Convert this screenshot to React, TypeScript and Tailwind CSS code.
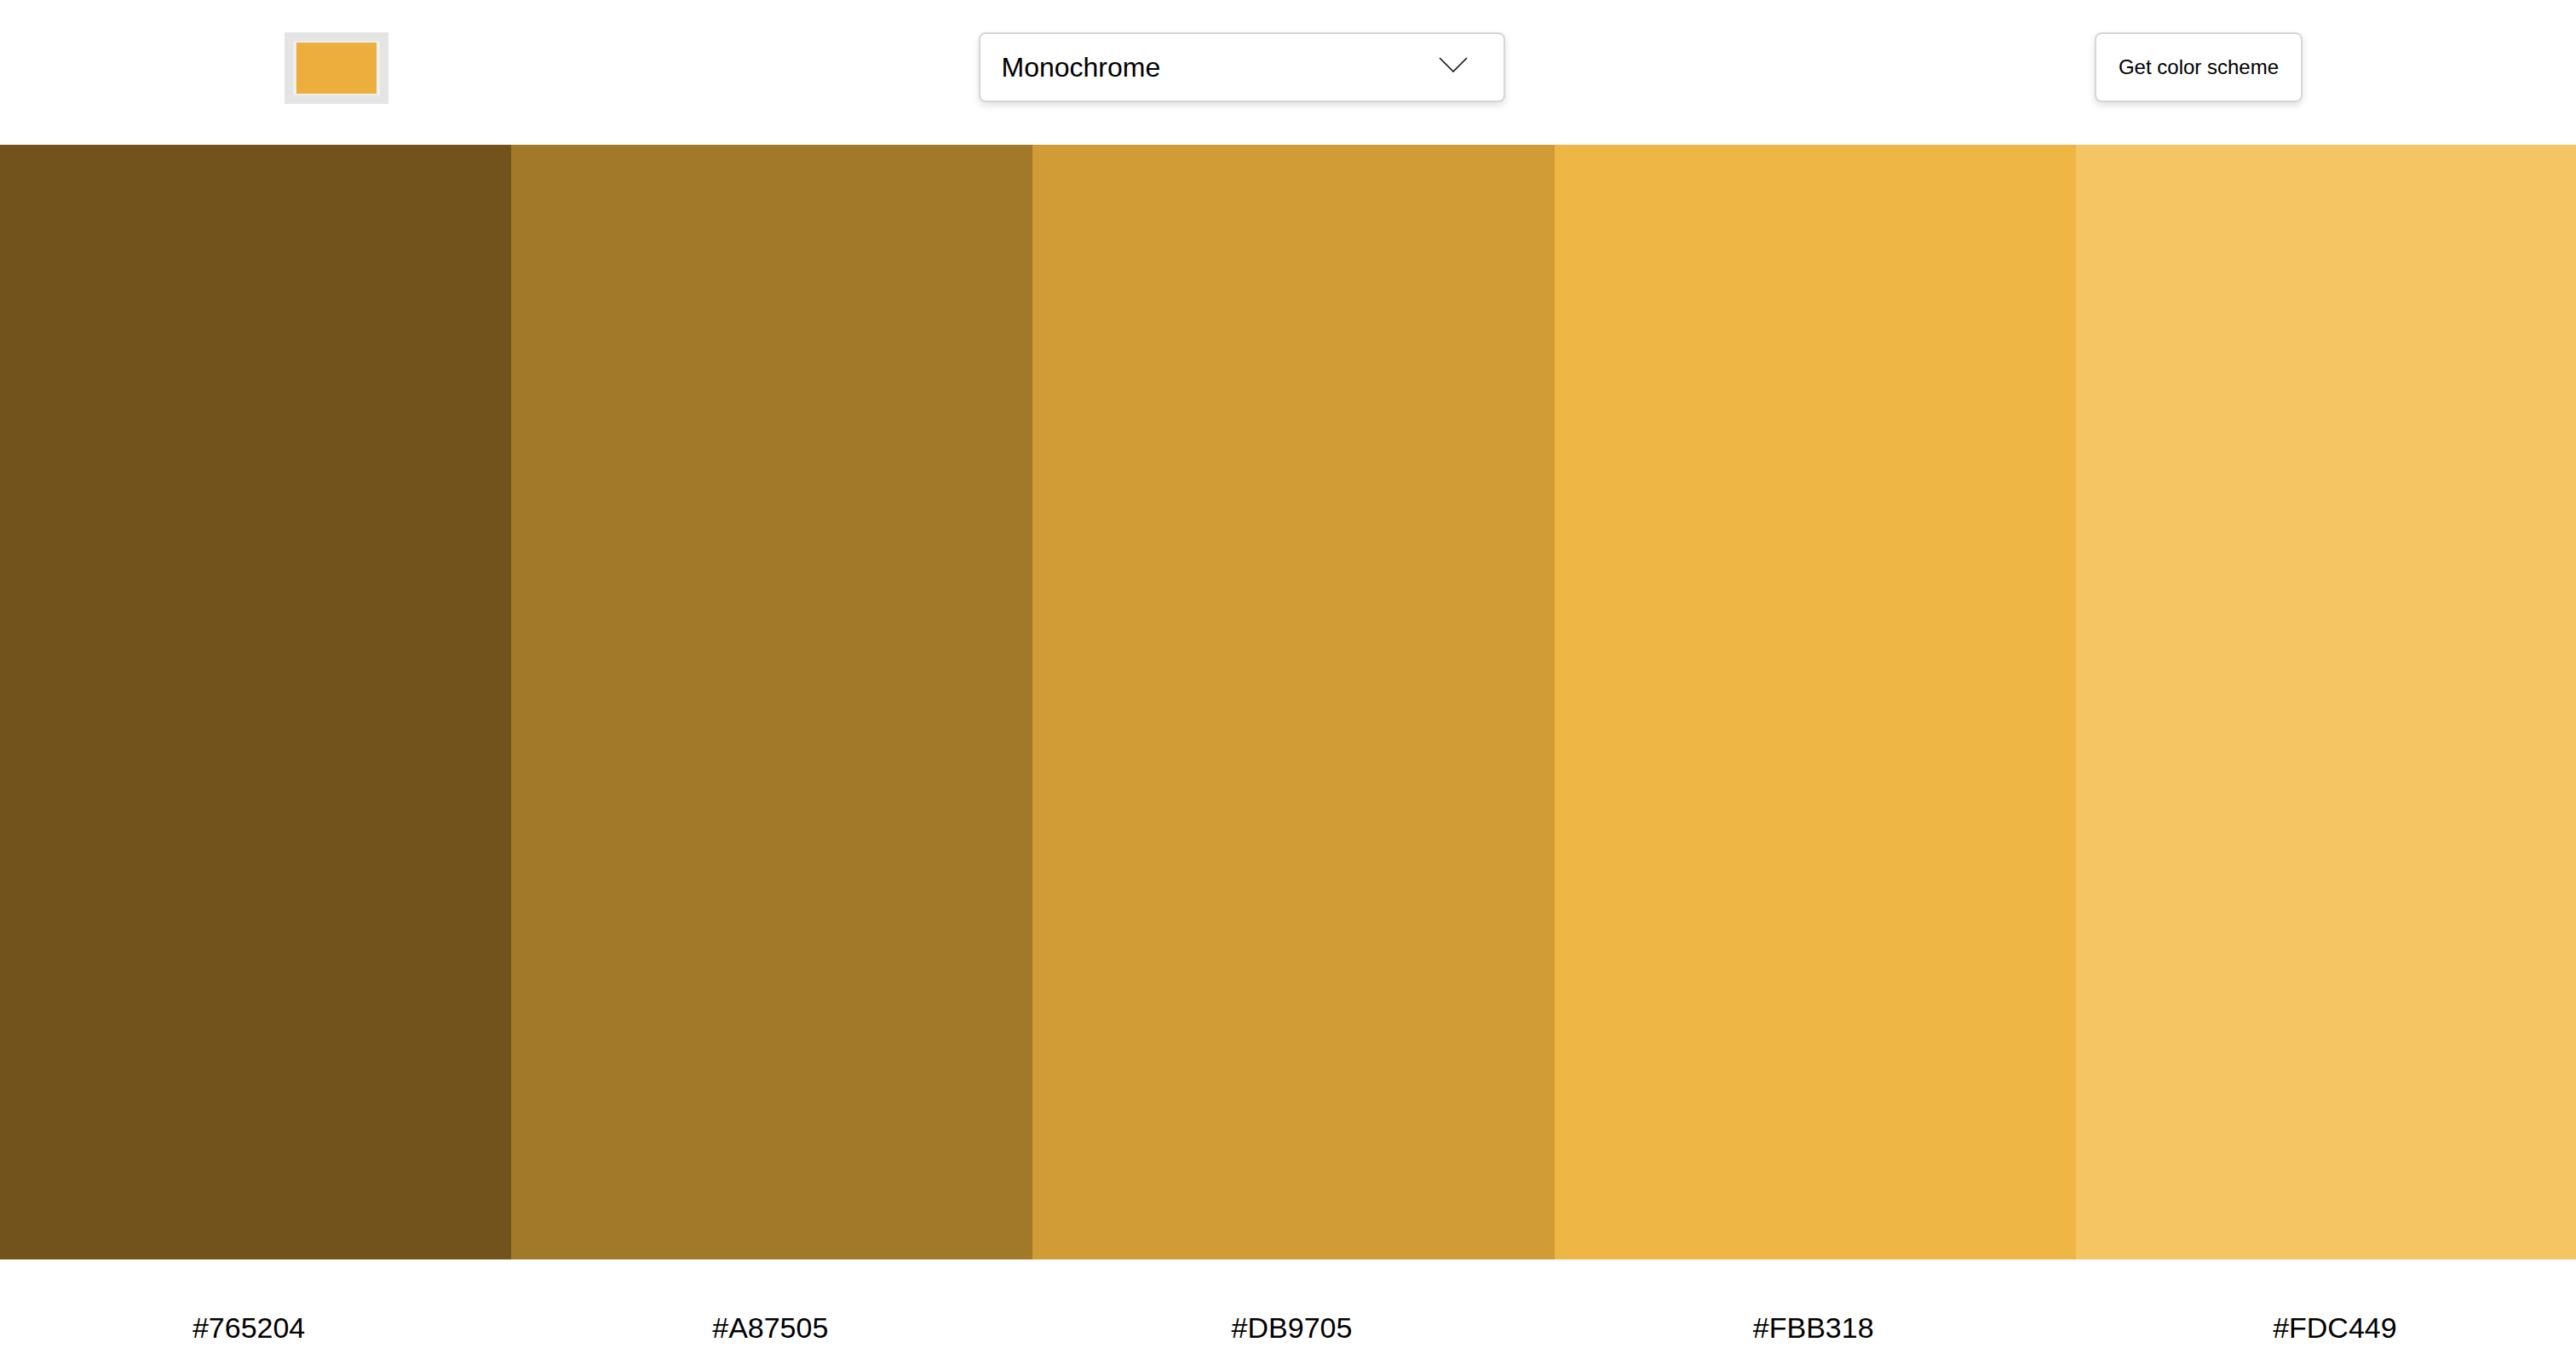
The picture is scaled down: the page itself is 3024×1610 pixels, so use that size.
import React from "react";

const colors = [
  { hex: "#765204", shown: "#72531b" },
  { hex: "#A87505", shown: "#a27829" },
  { hex: "#DB9705", shown: "#d19b36" },
  { hex: "#FBB318", shown: "#eeb645" },
  { hex: "#FDC449", shown: "#f3c563" },
];

export default function App() {
  return (
    <div
      className="w-full h-[1610px] overflow-hidden bg-white text-black"
      style={{ fontFamily: '"Liberation Sans", Arial, sans-serif' }}
    >
      <div className="w-[3061px] -ml-[12px] flex flex-col">
        <header className="h-[170px] flex items-start justify-between px-[346px] pt-[38px]">
          <div className="w-[122px] h-[84px] bg-[#e4e4e4] flex items-center justify-center">
            <div className="w-[102px] h-[64px] bg-[#efefef] flex items-center justify-center">
              <div className="w-[94px] h-[60px] bg-[#ecae3c]" />
            </div>
          </div>
          <div className="w-[618px] h-[82px] rounded-[8px] border-2 border-[#d4d6da] bg-white shadow-[0_4px_8px_rgba(0,0,0,0.12)] flex items-center justify-between pl-[25px] pr-[42px]">
            <span className="text-[32px] leading-none">Monochrome</span>
            <svg width="34" height="18" viewBox="0 0 34 18" fill="none" className="mb-[6px]">
              <polyline points="1,1 17,17 33,1" stroke="#111" strokeWidth="1.6" />
            </svg>
          </div>
          <button className="w-[244px] h-[82px] rounded-[8px] border-2 border-[#d4d6da] bg-white shadow-[0_4px_8px_rgba(0,0,0,0.12)] text-[24px] leading-none flex items-center justify-center">
            Get color scheme
          </button>
        </header>
        <div className="grid grid-cols-5 h-[1309px]">
          {colors.map((c) => (
            <div key={c.hex} style={{ backgroundColor: c.shown }} />
          ))}
        </div>
        <div className="grid grid-cols-5 pt-[60px]">
          {colors.map((c) => (
            <div key={c.hex} className="text-center text-[34px] leading-[40px] pr-[4px]">
              {c.hex}
            </div>
          ))}
        </div>
      </div>
    </div>
  );
}
